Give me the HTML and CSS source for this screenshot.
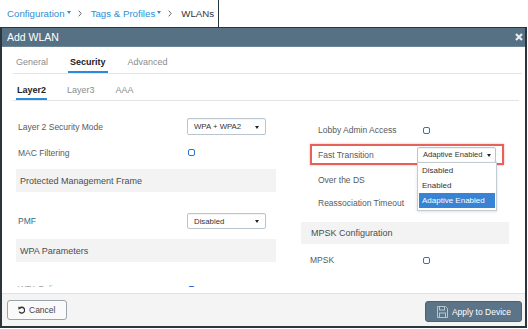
FILE: index.html
```html
<!DOCTYPE html>
<html lang="en">
<head>
    <meta charset="UTF-8">
    <meta name="viewport" content="width=device-width, initial-scale=1.0">
    <title>Add WLAN</title>
    <link rel="stylesheet" href="styles.css">
</head>
<body>
  <div class="crumbs">
    <span class="crumb">Configuration</span><span class="caret-dn"></span>
    <svg class="chev" width="4" height="7" viewBox="0 0 4 7"><path d="M0.7 0.7 L3.2 3.5 L0.7 6.3" fill="none" stroke="#666" stroke-width="1"/></svg>
    <span class="crumb">Tags &amp; Profiles</span><span class="caret-dn"></span>
    <svg class="chev" width="4" height="7" viewBox="0 0 4 7"><path d="M0.7 0.7 L3.2 3.5 L0.7 6.3" fill="none" stroke="#666" stroke-width="1"/></svg>
    <span class="current">WLANs</span>
  </div>

  <div class="modal">
    <div class="modal-head">
      <span class="modal-title">Add WLAN</span>
      <svg class="close" width="8" height="8" viewBox="0 0 8 8"><path d="M1 1 L7 7 M7 1 L1 7" stroke="#e6ebef" stroke-width="2.2"/></svg>
    </div>

    <div class="modal-body">
      <!-- main tabs -->
      <div class="tabs">
        <span class="tab">General</span>
        <span class="tab active">Security</span>
        <span class="tab">Advanced</span>
      </div>
      <!-- sub tabs -->
      <div class="tabs sub">
        <span class="tab active">Layer2</span>
        <span class="tab">Layer3</span>
        <span class="tab">AAA</span>
      </div>

      <div class="cols">
        <div class="col-left">
          <div class="row r-mode"><label>Layer 2 Security Mode</label><div class="select">WPA + WPA2<span class="caret"></span></div></div>
          <div class="row r-mac"><label>MAC Filtering</label><span class="check"></span></div>
          <div class="band b-pmf">Protected Management Frame</div>
          <div class="row r-pmf"><label class="teal">PMF</label><div class="select">Disabled<span class="caret"></span></div></div>
          <div class="band b-wpa">WPA Parameters</div>
          <div class="row r-wpa"><label>WPA Policy</label><span class="check"></span></div>
        </div>

        <div class="col-right">
          <div class="group">
            <div class="row r-lobby"><label>Lobby Admin Access</label><span class="check"></span></div>
            <div class="row r-ft">
              <label>Fast Transition</label>
              <div class="select-wrap">
                <div class="select ft-select">Adaptive Enabled<span class="caret"></span></div>
                <ul class="dropdown">
                  <li>Disabled</li>
                  <li>Enabled</li>
                  <li class="selected">Adaptive Enabled</li>
                </ul>
              </div>
            </div>
            <div class="row r-ds"><label>Over the DS</label><span class="check"></span></div>
            <div class="row r-reassoc"><label>Reassociation Timeout</label><div class="input"></div></div>
          </div>
          <div class="band b-mpsk">MPSK Configuration</div>
          <div class="row r-mpsk"><label>MPSK</label><span class="check"></span></div>
        </div>
      </div>
    </div>

    <div class="modal-foot">
      <button class="btn cancel">
        <svg width="7" height="8" viewBox="0 0 7 8"><path d="M1.6 2.2 A2.9 2.9 0 1 1 1.2 5.6" fill="none" stroke="#333" stroke-width="1.3"/><path d="M0.3 0.6 L3.1 2.1 L0.5 3.7 Z" fill="#333"/></svg>
        Cancel
      </button>
      <button class="btn apply">
        <svg width="11" height="12" viewBox="0 0 11 12"><path d="M0.5 0.5 H8.5 L10.5 2.5 V11.5 H0.5 Z" fill="none" stroke="#b9c5ce"/><rect x="2.5" y="0.5" width="5" height="3.5" fill="none" stroke="#b9c5ce"/><rect x="2.5" y="7" width="6" height="4.5" fill="none" stroke="#b9c5ce"/></svg>
        Apply to Device
      </button>
    </div>
  </div>
</body>
</html>
```

FILE: styles.css
```css
body {
    margin: 0;
    width: 528px;
    height: 329px;
    overflow: hidden;
    background-color: white;
    font-family: "Liberation Sans", Arial, sans-serif;
    color: #555b60;
}
.crumbs {
    width: 219px;
    height: 27px;
    box-sizing: border-box;
    border-right: 1px solid #2a353d;
    padding-left: 7px;
    display: flex;
    align-items: center;
    font-size: 9.7px;
}
.crumb {
    color: #2b8fd4;
}
.caret-dn {
    width: 0;
    height: 0;
    border-left: 2px solid transparent;
    border-right: 2px solid transparent;
    border-top: 3px solid #2b8fd4;
    margin: -3px 0 0 2px;
}
.chev {
    margin: 0 9px 0 7px;
}
.current {
    color: #333;
}

.modal {
    width: 527px;
    box-sizing: border-box;
    border: 2px solid #2a353d;
    border-top-width: 1px;
    display: flex;
    flex-direction: column;
}
.modal-head {
    height: 19px;
    background-color: #577184;
    border-bottom: 1px solid #6e8797;
    box-sizing: border-box;
    display: flex;
    align-items: center;
    justify-content: space-between;
    padding: 0 2px 0 5px;
}
.modal-title {
    color: white;
    font-size: 10.5px;
}
.modal-body {
    height: 246px;
    overflow: hidden;
}

/* tabs */
.tabs {
    display: flex;
    gap: 18px;
    margin: 0 3px 0 11px;
    padding: 9px 0 0 1px;
    border-bottom: 1px solid #e2e4e6;
}
.tab {
    font-size: 9px;
    line-height: 13px;
    color: #8a8d90;
    padding: 0 2px 2px;
    border-bottom: 2px solid transparent;
}
.tab.active {
    color: #222;
    font-weight: bold;
    border-bottom-color: #2d8ad6;
}
.tabs.sub {
    gap: 19px;
    margin-right: 6px;
    padding: 10px 0 0 3px;
}
.tabs.sub .tab {
    padding: 0 1px 1px;
}

/* columns, clipped like a scroll area */
.cols {
    display: flex;
    gap: 25px;
    padding-left: 14px;
    height: 186px;
    overflow: hidden;
}
.col-left {
    width: 260px;
}
.col-right {
    width: 208px;
}
.row {
    display: flex;
    align-items: center;
    font-size: 8.5px;
}
.col-left .row {
    padding-left: 2px;
}
.col-left .row label {
    width: 169px;
}
.teal {
    color: #2f6c7b;
}
.band {
    background-color: #f3f3f3;
    color: #4a4d50;
    font-size: 9px;
    display: flex;
    align-items: center;
    padding-left: 4px;
    height: 23px;
}
.r-mode { margin-top: 17px; height: 17px; }
.r-mac { margin-top: 9px; height: 17px; }
.b-pmf { margin-top: 8px; }
.r-pmf { margin-top: 21px; height: 16px; }
.b-wpa { margin-top: 10px; }
.r-wpa { margin-top: 19px; height: 16px; }
.r-wpa label { color: #9aa0a4; }
.r-mac .check, .r-wpa .check { margin-left: 1px; }

.select {
    position: relative;
    width: 79px;
    height: 100%;
    box-sizing: border-box;
    border: 1px solid #b9c6cf;
    border-radius: 2px;
    background-color: white;
    box-shadow: inset 0 1px 1px rgba(0, 0, 0, 0.05);
    color: #333;
    font-size: 7.8px;
    padding-left: 6px;
    display: flex;
    align-items: center;
}
.caret {
    position: absolute;
    right: 6px;
    top: 50%;
    margin-top: -1px;
    border-left: 2px solid transparent;
    border-right: 2px solid transparent;
    border-top: 3px solid #222;
}
.check {
    width: 7px;
    height: 7px;
    box-sizing: border-box;
    border: 1.6px solid #2f6fd1;
    border-radius: 2px;
}

/* right column */
.group {
    margin-left: 9px;
    width: 194px;
}
.group .row {
    border: 2px solid transparent;
    padding: 0 6px;
    box-sizing: border-box;
}
.group .row label {
    width: 104px;
}
.r-lobby { margin-top: 20px; height: 18px; }
.r-lobby .check { margin-left: 1px; }
.r-ft {
    margin-top: 5px;
    height: 21px;
    border-color: #e5615a !important;
    box-shadow: 0 0 2px rgba(229, 97, 90, 0.5);
}
.r-ds { margin-top: 6px; height: 18px; }
.r-ds .check { margin-left: 1px; }
.r-reassoc { margin-top: 6px; height: 16px; }
.select-wrap {
    position: relative;
    height: 16px;
}
.ft-select {
    font-size: 7.6px;
    padding-left: 5px;
}
.ft-select .caret {
    right: 4px;
}
.dropdown {
    position: absolute;
    z-index: 2;
    top: 15px;
    left: 0;
    width: 80px;
    box-sizing: border-box;
    margin: 0;
    padding: 0 1px 2px;
    list-style: none;
    background-color: white;
    border: 1px solid #c3ccd2;
    box-shadow: 0 1px 3px rgba(0, 0, 0, 0.12);
}
.dropdown li {
    height: 15px;
    line-height: 15px;
    font-size: 8px;
    color: #333;
    padding-left: 3px;
}
.dropdown li.selected {
    background-color: #3883d3;
    color: white;
}
.input {
    flex-shrink: 0;
    width: 48px;
    height: 16px;
    box-sizing: border-box;
    border: 1px solid #b9c6cf;
    border-radius: 2px;
}
.b-mpsk {
    margin-top: 11px;
    height: 22px;
    padding-left: 10px;
}
.r-mpsk {
    margin-top: 9px;
    height: 14px;
    padding-left: 9px;
}
.r-mpsk label {
    width: 113px;
}

/* footer */
.modal-foot {
    height: 33px;
    box-sizing: border-box;
    border-top: 1px solid #dfe1e3;
    background-color: #f4f4f4;
    display: flex;
    justify-content: space-between;
    align-items: flex-start;
    padding: 6px 3px 0 5px;
}
.btn {
    font-family: "Liberation Sans", Arial, sans-serif;
    font-size: 8.5px;
    display: flex;
    align-items: center;
    gap: 4px;
    border-radius: 3px;
    margin: 0;
}
.cancel {
    height: 20px;
    padding: 0 11px 0 10px;
    border: 1px solid #9aa4ab;
    background-color: #fafafa;
    color: #444;
}
.apply {
    height: 21px;
    margin-top: 1px;
    padding: 0 10px 0 11px;
    border: 1px solid #4b6273;
    background-color: #5b7488;
    color: white;
}
```
